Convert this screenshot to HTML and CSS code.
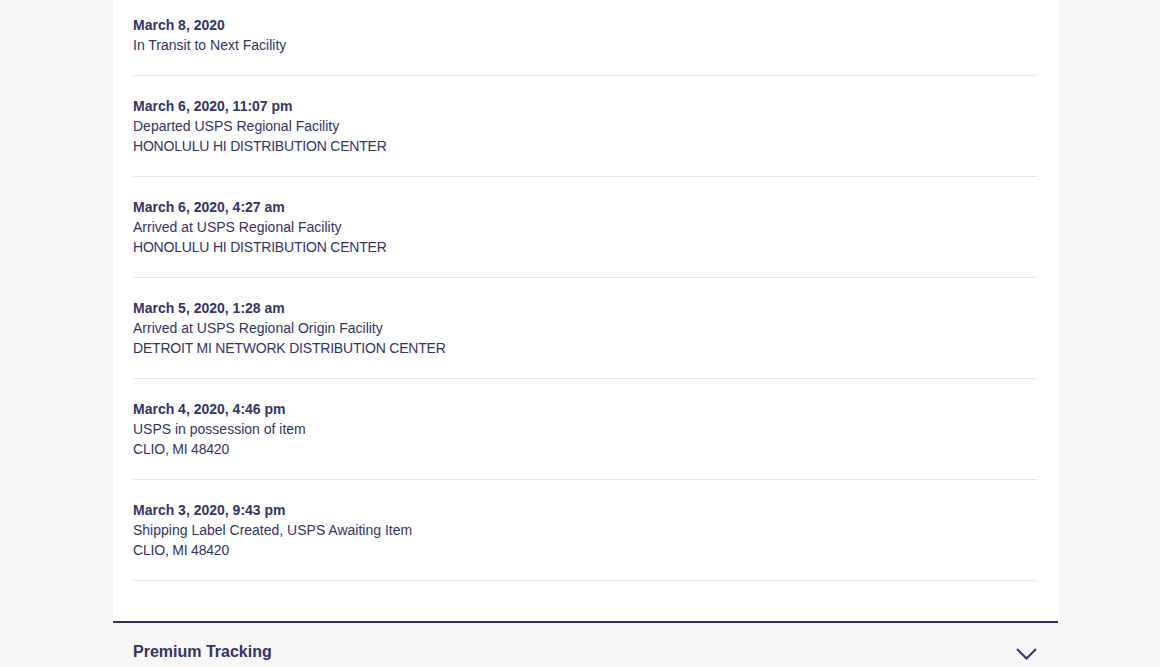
FILE: index.html
```html
<!DOCTYPE html>
<html>
<head>
<meta charset="utf-8">
<link rel="stylesheet" href="styles.css">
</head>
<body>
<div class="panel">
  <div class="history">
    <div class="event first">
      <div class="date">March 8, 2020</div>
      <div class="line">In Transit to Next Facility</div>
    </div>
    <div class="event">
      <div class="date">March 6, 2020, 11:07 pm</div>
      <div class="line">Departed USPS Regional Facility</div>
      <div class="line caps">HONOLULU HI DISTRIBUTION CENTER</div>
    </div>
    <div class="event">
      <div class="date">March 6, 2020, 4:27 am</div>
      <div class="line">Arrived at USPS Regional Facility</div>
      <div class="line caps">HONOLULU HI DISTRIBUTION CENTER</div>
    </div>
    <div class="event">
      <div class="date">March 5, 2020, 1:28 am</div>
      <div class="line">Arrived at USPS Regional Origin Facility</div>
      <div class="line caps">DETROIT MI NETWORK DISTRIBUTION CENTER</div>
    </div>
    <div class="event">
      <div class="date">March 4, 2020, 4:46 pm</div>
      <div class="line">USPS in possession of item</div>
      <div class="line caps">CLIO, MI 48420</div>
    </div>
    <div class="event">
      <div class="date">March 3, 2020, 9:43 pm</div>
      <div class="line">Shipping Label Created, USPS Awaiting Item</div>
      <div class="line caps">CLIO, MI 48420</div>
    </div>
  </div>
  <div class="premium">
    <span class="premium-title">Premium Tracking</span>
    <svg class="chevron" width="21" height="12" viewBox="0 0 21 12"><path d="M1 1 L10.5 10.5 L20 1" fill="none" stroke="#333366" stroke-width="2"/></svg>
  </div>
</div>
</body>
</html>
```
FILE: styles.css
```css
html, body {
  margin: 0;
  padding: 0;
  background: #f7f7f7;
  font-family: "Liberation Sans", Arial, sans-serif;
  color: #333366;
  overflow: hidden;
}
.panel {
  width: 945px;
  margin-left: 113px;
}
.history {
  background: #fff;
  padding: 0 20px 40px 20px;
  border-bottom: 2px solid #333366;
}
.event {
  padding: 20px 0;
  border-bottom: 1px solid #e6e6e6;
  font-size: 14px;
  line-height: 20px;
}
.event.first {
  padding-top: 15px;
}
.date {
  font-weight: bold;
}
.caps {
  letter-spacing: -0.2px;
}
.premium {
  display: flex;
  align-items: center;
  justify-content: space-between;
  padding: 19px 21px 17px 20px;
}
.premium-title {
  font-size: 16px;
  line-height: 20px;
  font-weight: bold;
}
.chevron {
  display: block;
  margin-top: 4px;
}
```
